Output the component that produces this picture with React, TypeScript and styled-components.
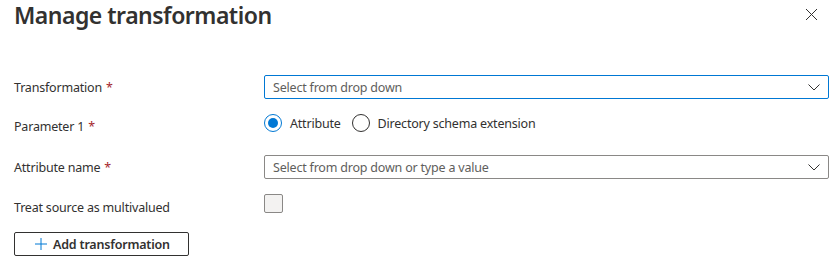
import styled, { createGlobalStyle } from "styled-components";

const GlobalStyle = createGlobalStyle`
  body {
    margin: 0;
    background: #ffffff;
    font-family: "Segoe UI", "Noto Sans", "Open Sans", sans-serif;
    color: #323130;
  }
`;

const Panel = styled.div`
  width: 832px;
  height: 278px;
  padding: 0 3px 0 14px;
  box-sizing: border-box;
  overflow: hidden;
`;

const Header = styled.div`
  display: flex;
  justify-content: space-between;
  align-items: flex-start;
  height: 40px;
`;

const Title = styled.h1`
  margin: 0;
  font-size: 23px;
  font-weight: 600;
  letter-spacing: -0.5px;
  line-height: 30px;
  color: #323130;
`;

const Close = styled.button`
  margin: 8px 10px 0 0;
  width: 14px;
  height: 14px;
  padding: 0;
  border: none;
  background: none;
  display: flex;
`;

const Row = styled.div<{ $top: number; $h: number }>`
  display: grid;
  grid-template-columns: 250px 1fr;
  grid-template-rows: ${(p) => p.$h}px;
  align-items: center;
  margin-top: ${(p) => p.$top}px;
  height: ${(p) => p.$h}px;
`;

// labels beside radios / checkbox sit a little lower than the control
const Label = styled.div<{ $drop?: number }>`
  padding-top: ${(p) => (p.$drop || 0) * 2}px;
  font-size: 12.5px;
  letter-spacing: -0.2px;
  color: #323130;
`;

const Req = styled.span`
  color: #a4262c;
  margin-left: 4px;
`;

const Dropdown = styled.div<{ $focus?: boolean }>`
  display: flex;
  align-items: center;
  justify-content: space-between;
  height: 24px;
  box-sizing: border-box;
  border: 1px solid ${(p) => (p.$focus ? "#0078d4" : "#8a8886")};
  border-radius: 2px;
  padding: 0 8px 0 8px;
  font-size: 12.5px;
  letter-spacing: -0.2px;
  color: #605e5c;
`;

const Radios = styled.div`
  display: flex;
  align-items: center;
  gap: 11px;
`;

const RadioItem = styled.label`
  display: flex;
  align-items: center;
  gap: 8px;
  font-size: 12.5px;
  letter-spacing: -0.2px;
  color: #323130;
`;

const RadioCircle = styled.span<{ $on?: boolean }>`
  width: 18px;
  height: 18px;
  box-sizing: border-box;
  border-radius: 50%;
  border: 1px solid ${(p) => (p.$on ? "#0078d4" : "#323130")};
  display: flex;
  align-items: center;
  justify-content: center;
  &::after {
    content: "";
    width: 10px;
    height: 10px;
    border-radius: 50%;
    background: ${(p) => (p.$on ? "#0078d4" : "transparent")};
  }
`;

const Check = styled.span`
  width: 19px;
  height: 19px;
  box-sizing: border-box;
  border: 1px solid #8a8886;
  border-radius: 2px;
  background: #f3f2f1;
`;

const Button = styled.button`
  margin-top: 19px;
  display: flex;
  align-items: center;
  gap: 6px;
  height: 24px;
  width: 175px;
  box-sizing: border-box;
  padding: 0 0 0 20px;
  border: 1px solid #323130;
  border-radius: 2px;
  background: #ffffff;
  font-family: inherit;
  font-size: 12.5px;
  letter-spacing: -0.2px;
  font-weight: 600;
  color: #323130;
`;

const Chevron = () => (
  <svg width="12" height="7" viewBox="0 0 12 7" fill="none">
    <path d="M0.5 0.5 L6 6 L11.5 0.5" stroke="#323130" strokeWidth="1" />
  </svg>
);

const App = () => {
  return (
    <Panel>
      <GlobalStyle />
      <Header>
        <Title>Manage transformation</Title>
        <Close aria-label="Close">
          <svg width="13" height="13" viewBox="0 0 13 13">
            <path d="M1 1 L12 12 M12 1 L1 12" stroke="#323130" strokeWidth="1" />
          </svg>
        </Close>
      </Header>

      <Row $top={35} $h={24}>
        <Label>
          Transformation<Req>*</Req>
        </Label>
        <Dropdown $focus>
          <span>Select from drop down</span>
          <Chevron />
        </Dropdown>
      </Row>

      <Row $top={14} $h={20}>
        <Label $drop={3}>
          Parameter 1<Req>*</Req>
        </Label>
        <Radios>
          <RadioItem>
            <RadioCircle $on />
            Attribute
          </RadioItem>
          <RadioItem>
            <RadioCircle />
            Directory schema extension
          </RadioItem>
        </Radios>
      </Row>

      <Row $top={22} $h={24}>
        <Label>
          Attribute name<Req>*</Req>
        </Label>
        <Dropdown>
          <span>Select from drop down or type a value</span>
          <Chevron />
        </Dropdown>
      </Row>

      <Row $top={14} $h={20}>
        <Label $drop={4}>Treat source as multivalued</Label>
        <Check />
      </Row>

      <Button>
        <svg width="12" height="12" viewBox="0 0 12 12">
          <path d="M6 0 V12 M0 6 H12" stroke="#0078d4" strokeWidth="1" />
        </svg>
        Add transformation
      </Button>
    </Panel>
  );
};

export default App;
